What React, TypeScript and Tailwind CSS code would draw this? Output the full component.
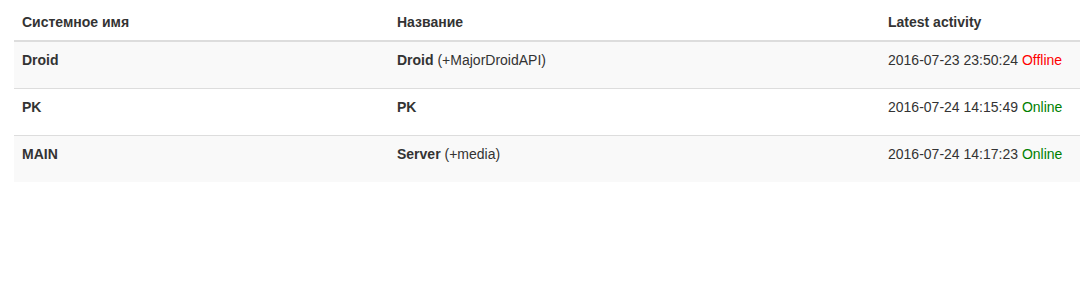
const rows = [
  { sys: "Droid", name: "Droid", extra: "(+MajorDroidAPI)", time: "2016-07-23 23:50:24", online: false },
  { sys: "PK", name: "PK", extra: "", time: "2016-07-24 14:15:49", online: true },
  { sys: "MAIN", name: "Server", extra: "(+media)", time: "2016-07-24 14:17:23", online: true },
];

export default function App() {
  return (
    <div
      className="w-[1080px] h-[285px] overflow-hidden bg-white text-[14px] leading-[20px] text-[#333]"
      style={{ fontFamily: '"Liberation Sans", Arial, sans-serif' }}
    >
      <div className="pl-[14px] pt-[3px]">
        <table className="w-[1100px] border-collapse table-fixed">
          <colgroup>
            <col className="w-[375px]" />
            <col className="w-[491px]" />
            <col />
          </colgroup>
          <thead>
            <tr>
              <th className="text-left font-bold px-2 py-2 h-[38px] border-b-2 border-[#ddd] align-middle">Системное имя</th>
              <th className="text-left font-bold px-2 py-2 h-[38px] border-b-2 border-[#ddd] align-middle">Название</th>
              <th className="text-left font-bold px-2 py-2 h-[38px] border-b-2 border-[#ddd] align-middle">Latest activity</th>
            </tr>
          </thead>
          <tbody>
            {rows.map((r, i) => (
              <tr key={r.sys} className={i % 2 === 0 ? "bg-[#f9f9f9]" : "bg-white"}>
                <td className={`px-2 pt-2 h-[47px] align-top font-bold ${i > 0 ? "border-t border-[#ddd]" : ""}`}>{r.sys}</td>
                <td className={`px-2 pt-2 h-[47px] align-top ${i > 0 ? "border-t border-[#ddd]" : ""}`}>
                  <b>{r.name}</b>
                  {r.extra && <> {r.extra}</>}
                </td>
                <td className={`px-2 pt-2 h-[47px] align-top ${i > 0 ? "border-t border-[#ddd]" : ""}`}>
                  {r.time}{" "}
                  <span className={r.online ? "text-[#008000]" : "text-[#ff0000]"}>{r.online ? "Online" : "Offline"}</span>
                </td>
              </tr>
            ))}
          </tbody>
        </table>
      </div>
    </div>
  );
}
